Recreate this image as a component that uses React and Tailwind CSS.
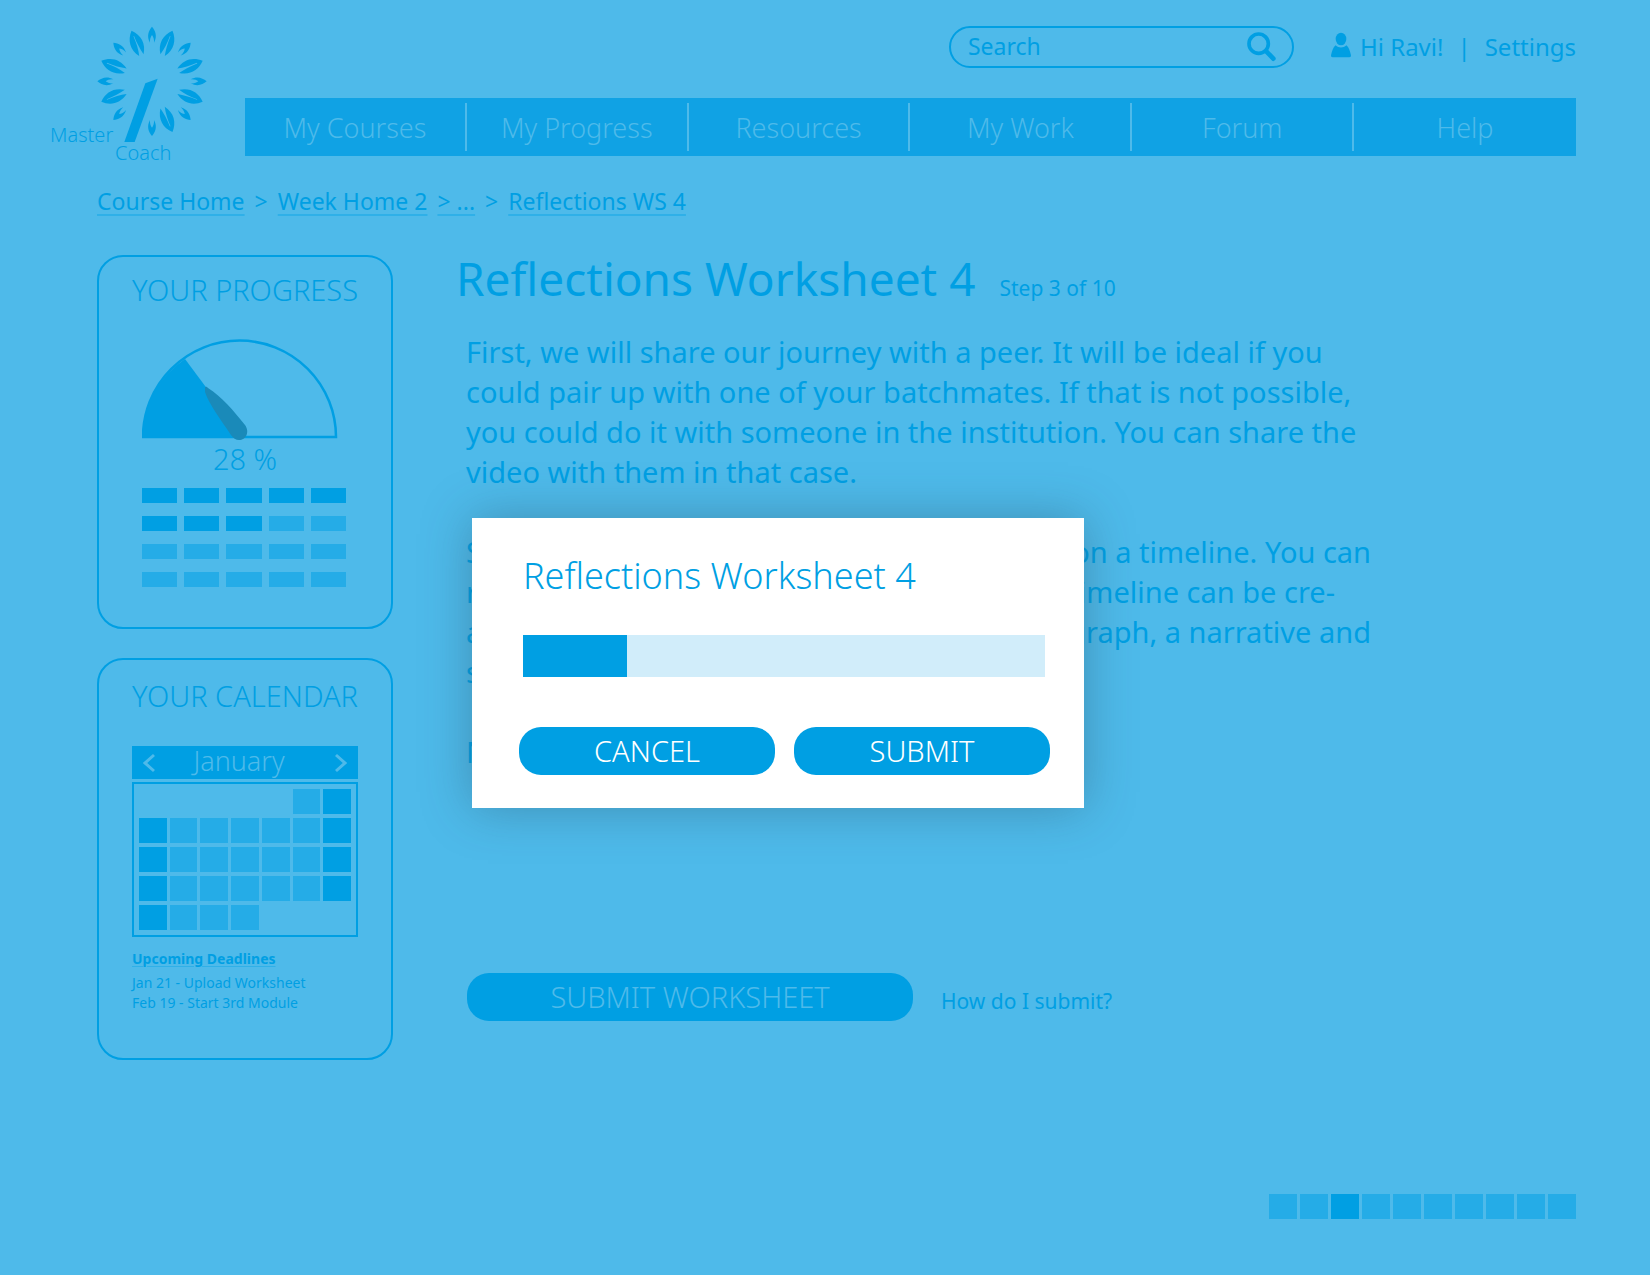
import React from "react";

const navItems = ["My Courses", "My Progress", "Resources", "My Work", "Forum", "Help"];

const progressCells = Array.from({ length: 20 }, (_, i) => i < 8);

// "-" is a day outside the month, "o" a weekday, "x" a weekend day
const calendar = ["-----ox", "xooooox", "xooooox", "xooooox", "xooo---"].join("").split("");

const SMALL_LEAF =
  "M174 14 C184 26 191 42 180 62 C181 52 178 44 174 39 C170 44 167 52 168 62 C157 42 164 26 174 14Z";
const LARGE_LEAF =
  "M174 14 C152 36 148 66 167 93 C172 75 173.500 55 173 32 L175 32 C174.500 55 177 75 181 93 C200 66 196 36 174 14Z";

function Logo() {
  return (
    <svg
      className="ml-[50px] h-36 w-[162px] fill-[#009fe3]"
      viewBox="0 0 162 144"
      role="img"
      aria-label="Master Coach"
    >
      <g transform="translate(44 0) scale(0.3333)">
        {[0, 45, 90, 135, 180, 225, 270, 315].map((a) => (
          <path key={a} d={SMALL_LEAF} transform={`rotate(${a} 174 178)`} />
        ))}
        {[22, 68, 112, 158, 248, 292, 338].map((a) => (
          <path key={a} d={LARGE_LEAF} transform={`rotate(${a} 174 178)`} />
        ))}
        <path d="M154 184 L191 170 L122 360 L91 360Z" />
      </g>
      <text x="0" y="120" className="text-[20px] font-light">Master</text>
      <text x="65" y="138" className="text-[20px] font-light">Coach</text>
    </svg>
  );
}

function Header() {
  return (
    <header className="flex pr-[74px]">
      <a href="#home" className="w-[245px] shrink-0 pt-[22px]">
        <Logo />
      </a>
      <div className="min-w-0 flex-1 pt-[26px]">
        <div className="flex items-center justify-end">
          <div className="flex h-[42px] w-[345px] items-center rounded-[21px] border-2 border-[#009fe3] pr-4 pl-[17px]">
            <input
              type="text"
              aria-label="Search"
              placeholder="Search"
              className="h-9 min-w-0 flex-1 bg-transparent pb-0.5 text-[23px] leading-8 outline-none placeholder:text-[#009fe3] placeholder:opacity-100"
            />
            <svg className="h-8 w-[30px]" viewBox="0 0 90 96" fill="none" stroke="#009fe3">
              <circle cx="38" cy="38" r="29" strokeWidth="11" />
              <path d="M61 61 L82 83" strokeWidth="14" strokeLinecap="round" />
            </svg>
          </div>
          <svg className="mr-2 mb-1 ml-9 h-[26px] w-[22px] fill-[#009fe3]" viewBox="0 0 66 78" aria-hidden="true">
            <ellipse cx="33" cy="21" rx="16" ry="19" />
            <path d="M17 40 C26 49 40 49 49 40 C57 46 60 58 63 70 Q64 76 58 76 H8 Q2 76 3 70 C6 58 9 46 17 40Z" />
          </svg>
          <div className="flex gap-[14px] text-[24px] leading-8">
            <span>Hi Ravi!</span>
            <span>|</span>
            <a href="#settings">Settings</a>
          </div>
        </div>
        <nav className="mt-[30px] grid h-[58px] grid-cols-6 items-center divide-x-2 divide-[#4ebaea] bg-[#10a2e4] text-[27px] leading-8 font-light text-[#4ebaea]">
          {navItems.map((item) => (
            <a key={item} href="#nav" className="flex h-12 items-center justify-center pt-0.5">
              {item}
            </a>
          ))}
        </nav>
      </div>
    </header>
  );
}

function Breadcrumb() {
  const link = "underline decoration-[#2fb0e8] decoration-2 underline-offset-4";
  return (
    <nav aria-label="Breadcrumb" className="mt-[21px] flex gap-2.5 pl-[97px] text-[23px] leading-7">
      <a href="#course" className={link}>Course Home</a>
      <span>&gt;</span>
      <a href="#week" className={link}>Week Home 2</a>
      <a href="#more" className={link}>&gt; ...</a>
      <span>&gt;</span>
      <a href="#reflections" className={link}>Reflections WS 4</a>
    </nav>
  );
}

function ProgressCard() {
  return (
    <section className="rounded-[26px] border-2 border-[#009fe3] px-[43px] pt-[13px] pb-10">
      <h2 className="-mx-8 text-center text-[29px] leading-10 font-light">YOUR PROGRESS</h2>
      <svg className="mt-[29px] h-[102px] w-[198px]" viewBox="0 0 198 102" aria-hidden="true">
        <path d="M1 98 A96 96 0 0 1 194 98 Z" fill="none" stroke="#009fe3" strokeWidth="2.500" />
        <path d="M0 99 A98 98 0 0 1 43 20 L98 94 V99Z" fill="#009fe3" />
        <path d="M63 49 C63 47 65 48 66 49 C80 58 91 71 103 86 C108 93 104 101 97 101 C94 101 91 99 89 96 C79 81 67 65 63 53Z" fill="#1a8ab9" />
      </svg>
      <p className="-mt-0.5 text-center text-[29px] leading-10 font-light">28 %</p>
      <div className="mt-[9px] mr-0.5 grid grid-cols-5 gap-x-[7px] gap-y-[13px]">
        {progressCells.map((done, i) => (
          <div key={i} className={done ? "h-[15px] bg-[#009fe3]" : "h-[15px] bg-[#25ace7]"} />
        ))}
      </div>
    </section>
  );
}

function Chevron({ d }) {
  return (
    <svg className="h-5 w-3" viewBox="0 0 12 20" fill="none" stroke="currentColor" strokeWidth="3">
      <path d={d} />
    </svg>
  );
}

function CalendarCard() {
  return (
    <section className="rounded-[26px] border-2 border-[#009fe3] px-[33px] pt-4 pb-[45px]">
      <h2 className="-mx-6 text-center text-[29px] leading-10 font-light">YOUR CALENDAR</h2>
      <div className="mt-[30px] flex h-[33px] items-center justify-between bg-[#009fe3] px-[11px] text-[#4ebaea]">
        <button type="button" aria-label="Previous month">
          <Chevron d="M11 2 L2 10 L11 18" />
        </button>
        <span className="-mt-1 -ml-3 text-[27px] leading-8 font-light">January</span>
        <button type="button" aria-label="Next month">
          <Chevron d="M1 2 L10 10 L1 18" />
        </button>
      </div>
      <div className="mt-[3px] grid grid-cols-7 gap-x-[3px] gap-y-1 border-2 border-[#009fe3] px-[5px] pt-[5px] pb-[5px]">
        {calendar.map((day, i) => (
          <div
            key={i}
            className={
              day === "x" ? "h-[25px] bg-[#009fe3]" : day === "o" ? "h-[25px] bg-[#25ace7]" : "h-[25px]"
            }
          />
        ))}
      </div>
      <h3 className="mt-3 text-[14px] leading-5 font-bold underline decoration-[#2fb0e8] decoration-1 underline-offset-2">
        Upcoming Deadlines
      </h3>
      <ul className="mt-1 text-[14px] leading-5">
        <li>Jan 21 - Upload Worksheet</li>
        <li>Feb 19 - Start 3rd Module</li>
      </ul>
    </section>
  );
}

function SubmitDialog() {
  const button = "h-12 flex-1 rounded-[22px] bg-[#009fe3] text-[29px] leading-8 font-light text-white";
  return (
    <div
      role="dialog"
      aria-labelledby="dialog-title"
      className="absolute top-[270px] left-4 w-[612px] bg-white px-[47px] pt-[33px] pb-[33px] shadow-[0_0_46px_rgba(40,70,90,0.38)]"
    >
      <h2 id="dialog-title" className="pl-1 text-[36px] leading-[50px] font-light">
        Reflections Worksheet 4
      </h2>
      <div
        role="progressbar"
        aria-valuenow={20}
        aria-label="Worksheet progress"
        className="mt-[34px] mr-[-8px] ml-1 h-[42px] bg-[#d1edfa]"
      >
        <div className="h-full w-1/5 bg-[#009fe3]" />
      </div>
      <div className="mt-[50px] -mr-[13px] flex gap-[19px]">
        <button type="button" className={button}>CANCEL</button>
        <button type="button" className={button}>SUBMIT</button>
      </div>
    </div>
  );
}

function Worksheet() {
  return (
    <main className="relative min-w-0 flex-1">
      <div className="flex items-baseline gap-6">
        <h1 className="text-[46px] leading-[60px]">Reflections Worksheet 4</h1>
        <span className="text-[21px]">Step 3 of 10</span>
      </div>
      <div className="mt-6 flex flex-col gap-10 pl-2.5 text-[29px] leading-10">
        <p>
          First, we will share our journey with a peer. It will be ideal if you
          <br />
          could pair up with one of your batchmates. If that is not possible,
          <br />
          you could do it with someone in the institution. You can share the
          <br />
          video with them in that case.
        </p>
        <div className="w-[905px]">
          <p className="flex justify-between">
            <span>S</span>
            <span>on a timeline. You can</span>
          </p>
          <p className="flex justify-between pr-9">
            <span>r</span>
            <span>timeline can be cre-</span>
          </p>
          <p className="flex justify-between">
            <span>a</span>
            <span>graph, a narrative and</span>
          </p>
          <p>s</p>
        </div>
        <p>N</p>
      </div>
      <div className="mt-[201px] flex items-center gap-7 pl-[11px]">
        <button
          type="button"
          className="h-12 w-[446px] rounded-[22px] bg-[#009fe3] text-[29px] leading-8 font-light text-[#4ebaea]"
        >
          SUBMIT WORKSHEET
        </button>
        <a href="#help" className="pt-2 text-[21px] leading-8">How do I submit?</a>
      </div>
      <SubmitDialog />
    </main>
  );
}

export default function App() {
  return (
    <div className="flex min-h-screen flex-col bg-[#4ebaea] font-['Noto_Sans','Open_Sans',sans-serif] text-[#009fe3]">
      <Header />
      <Breadcrumb />
      <div className="mt-[33px] flex gap-[63px] pr-[74px] pl-[97px]">
        <aside className="flex w-[296px] shrink-0 flex-col gap-[29px] pt-[7px]">
          <ProgressCard />
          <CalendarCard />
        </aside>
        <Worksheet />
      </div>
      <footer className="mt-auto flex justify-end gap-[3px] pt-10 pr-[74px] pb-14">
        {Array.from({ length: 10 }, (_, i) => (
          <button
            key={i}
            type="button"
            aria-label={`Step ${i + 1}`}
            className={i === 2 ? "h-[25px] w-7 bg-[#009fe3]" : "h-[25px] w-7 bg-[#25ace7]"}
          />
        ))}
      </footer>
    </div>
  );
}
